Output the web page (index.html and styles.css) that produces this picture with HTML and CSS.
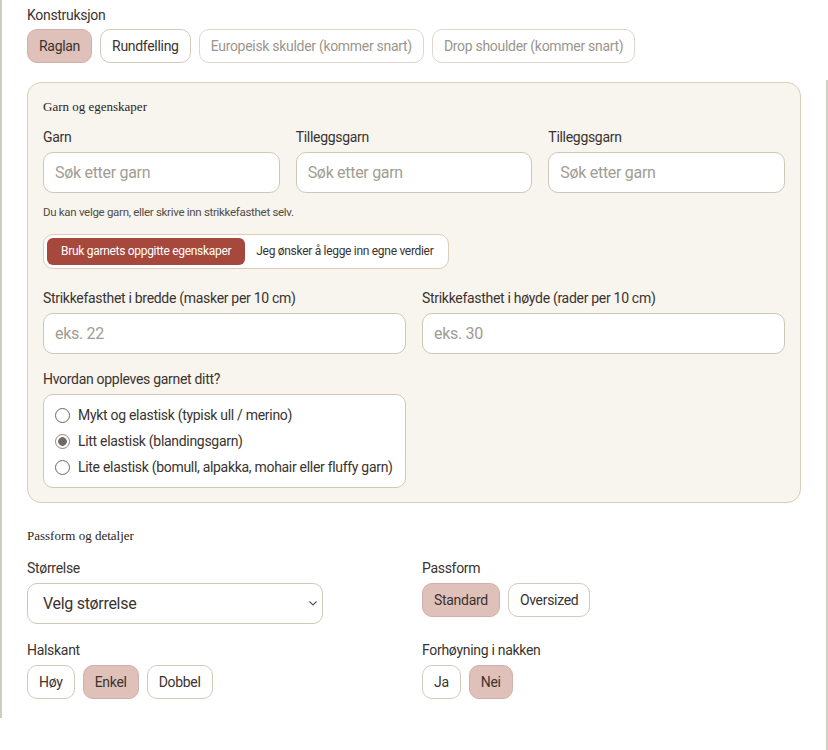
FILE: index.html
```html
<!DOCTYPE html>
<html lang="no">
<head>
	<title>Oppskrift</title>
	<meta charset="UTF-8">
	<link rel="stylesheet" href="styles.css">
</head>
<body>
	<div class="page">
		<div class="field">
			<div class="label">Konstruksjon</div>
			<div class="choices">
				<button class="choice on">Raglan</button>
				<button class="choice">Rundfelling</button>
				<button class="choice off">Europeisk skulder (kommer snart)</button>
				<button class="choice off">Drop shoulder (kommer snart)</button>
			</div>
		</div>

		<div class="panel">
			<h3 class="section">Garn og egenskaper</h3>
			<div class="cols3">
				<div>
					<div class="label">Garn</div>
					<input class="text" type="text" placeholder="Søk etter garn">
				</div>
				<div>
					<div class="label">Tilleggsgarn</div>
					<input class="text" type="text" placeholder="Søk etter garn">
				</div>
				<div>
					<div class="label">Tilleggsgarn</div>
					<input class="text" type="text" placeholder="Søk etter garn">
				</div>
			</div>
			<p class="hint">Du kan velge garn, eller skrive inn strikkefasthet selv.</p>
			<div class="switch">
				<span class="seg active">Bruk garnets oppgitte egenskaper</span>
				<span class="seg">Jeg ønsker å legge inn egne verdier</span>
			</div>
			<div class="cols2 gauge">
				<div>
					<div class="label">Strikkefasthet i bredde (masker per 10 cm)</div>
					<input class="text" type="text" placeholder="eks. 22">
				</div>
				<div>
					<div class="label">Strikkefasthet i høyde (rader per 10 cm)</div>
					<input class="text" type="text" placeholder="eks. 30">
				</div>
			</div>
			<div class="cols2 feel">
				<div>
					<div class="label">Hvordan oppleves garnet ditt?</div>
					<div class="radios">
						<label class="radio"><span class="dot"></span>Mykt og elastisk (typisk ull / merino)</label>
						<label class="radio"><span class="dot checked"></span>Litt elastisk (blandingsgarn)</label>
						<label class="radio"><span class="dot"></span>Lite elastisk (bomull, alpakka, mohair eller fluffy garn)</label>
					</div>
				</div>
			</div>
		</div>

		<h3 class="section lower">Passform og detaljer</h3>
		<div class="grid2">
			<div>
				<div class="label">Størrelse</div>
				<div class="select">
					<span>Velg størrelse</span>
					<svg width="8" height="5" viewBox="0 0 8 5"><path d="M0.5 0.5 L4 4 L7.5 0.5" fill="none" stroke="#555" stroke-width="1.1"/></svg>
				</div>
			</div>
			<div>
				<div class="label">Passform</div>
				<div class="choices">
					<button class="choice on">Standard</button>
					<button class="choice">Oversized</button>
				</div>
			</div>
			<div>
				<div class="label">Halskant</div>
				<div class="choices">
					<button class="choice">Høy</button>
					<button class="choice on">Enkel</button>
					<button class="choice">Dobbel</button>
				</div>
			</div>
			<div>
				<div class="label">Forhøyning i nakken</div>
				<div class="choices">
					<button class="choice">Ja</button>
					<button class="choice on">Nei</button>
				</div>
			</div>
		</div>
	</div>
</body>
</html>
```

FILE: styles.css
```css
body {
	margin: 0;
	font-family: Roboto, "Noto Sans", sans-serif;
	letter-spacing: -0.3px;
	color: #3a3330;
	background: #fff linear-gradient(#cdcdc0, #cdcdc0) no-repeat right 0 top 80px / 2px 670px;
}

.page {
	border-left: 2px solid #cdcdc0;
	padding: 5px 27px 19px 25px;
}

.label {
	font-size: 14px;
	line-height: 20px;
	margin-bottom: 5px;
}

.field .label {
	margin-bottom: 4px;
}

.choices {
	display: flex;
	gap: 8px;
}

.choice {
	box-sizing: border-box;
	height: 34px;
	font-family: inherit;
	font-size: 14px;
	letter-spacing: -0.3px;
	padding: 0 11px;
	background: #fff;
	color: #3a3330;
	border: 1px solid #cfcbbb;
	border-radius: 10px;
}

.choice.on {
	background: #e0c1ba;
	border-color: #d0b0a8;
}

.choice.off {
	color: #9b968d;
	border-color: #dcd8cc;
}

.panel {
	margin-top: 19px;
	background: #f8f4ee;
	border: 1px solid #dccdb8;
	border-radius: 14px;
	padding: 15px 15px 14px;
}

.section {
	font-family: "Liberation Serif", "DejaVu Serif", serif;
	font-size: 13px;
	line-height: 18px;
	letter-spacing: 0;
	font-weight: normal;
	color: #2a2421;
	margin: 0 0 11px;
}

.section.lower {
	margin: 24px 0 13px;
}

.cols3 {
	display: grid;
	grid-template-columns: 1fr 1fr 1fr;
	gap: 16px;
}

.cols2 {
	display: grid;
	grid-template-columns: 1fr 1fr;
	gap: 16px;
}

.text {
	box-sizing: border-box;
	width: 100%;
	height: 41px;
	font-family: inherit;
	font-size: 16px;
	letter-spacing: -0.3px;
	padding: 0 11px;
	background: #fff;
	border: 1px solid #cfc8b6;
	border-radius: 10px;
	color: #3a3330;
}

.text::placeholder {
	color: #a29d93;
}

.hint {
	font-size: 11.5px;
	line-height: 16px;
	margin: 11px 0 14px;
	color: #534b46;
}

.switch {
	display: inline-flex;
	align-items: center;
	gap: 11px;
	padding: 3px 15px 3px 3px;
	background: #fff;
	border: 1px solid #dccdb8;
	border-radius: 10px;
}

.seg {
	font-size: 12px;
	line-height: 27px;
	border-radius: 6px;
}

.seg.active {
	padding: 0 14px;
	background: #a6483b;
	color: #fff;
}

.gauge {
	margin-top: 19px;
}

.feel {
	margin-top: 15px;
}

.radios {
	background: #fff;
	border: 1px solid #cfc8b6;
	border-radius: 10px;
	padding: 7px 11px 7px;
}

.radio {
	display: flex;
	align-items: center;
	gap: 8px;
	font-size: 14px;
	line-height: 26px;
	white-space: nowrap;
}

.dot {
	box-sizing: border-box;
	flex: none;
	width: 15px;
	height: 15px;
	border: 1px solid #6d6863;
	border-radius: 50%;
	background: #fff;
}

.dot.checked {
	border-color: #8a8580;
	background: radial-gradient(circle, #706b66 0 4px, #fff 4.6px);
}

.grid2 {
	display: grid;
	grid-template-columns: 1fr 1fr;
	gap: 16px;
}

.select {
	box-sizing: border-box;
	width: 296px;
	height: 41px;
	display: flex;
	align-items: center;
	justify-content: space-between;
	padding: 0 5px 0 15px;
	font-size: 16px;
	border: 1px solid #cfc8b6;
	border-radius: 10px;
	background: #fff;
}
```
